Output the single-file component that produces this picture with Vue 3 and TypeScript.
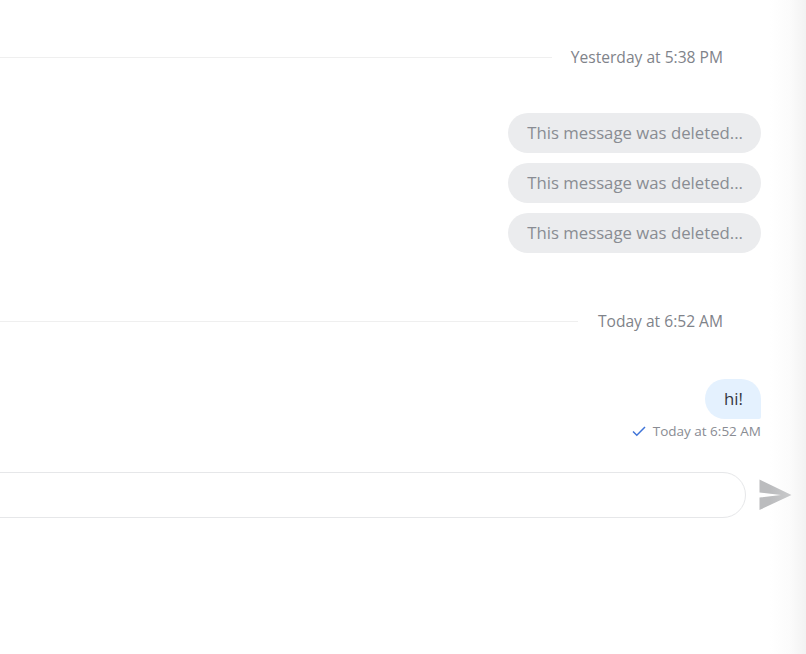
<template>
  <div class="chat-page">
    <div class="thread">
      <div class="divider first">
        <span class="divider-line"></span>
        <span class="divider-label">Yesterday at 5:38 PM</span>
      </div>

      <div class="deleted-list">
        <div v-for="id in deletedIds" :key="id" class="bubble deleted">This message was deleted...</div>
      </div>

      <div class="divider second">
        <span class="divider-line"></span>
        <span class="divider-label">Today at 6:52 AM</span>
      </div>

      <div class="bubble mine">hi!</div>
      <div class="meta">
        <svg class="check" width="14" height="11" viewBox="0 0 14 11" fill="none">
          <path d="M1 5.5 L4.8 9.2 L13 1" stroke="#3f74d8" stroke-width="1.5" />
        </svg>
        <span>Today at 6:52 AM</span>
      </div>
    </div>

    <div class="composer">
      <div class="input-box"></div>
      <button class="send-btn" type="button" aria-label="Send">
        <svg width="33" height="32" viewBox="0 0 33 32">
          <path d="M0.5 0.5 L32.5 16 L0.5 31 L0.5 18.5 L22 16 L0.5 13.5 Z" fill="#bbbcbe" />
        </svg>
      </button>
    </div>

    <div class="edge-shadow"></div>
  </div>
</template>

<script setup lang="ts">
const deletedIds = [1, 2, 3]
</script>

<style scoped>
.chat-page {
  position: relative;
  width: 806px;
  height: 654px;
  overflow: hidden;
  background: #fff;
  font-family: "Open Sans", "Liberation Sans", sans-serif;
}

.thread {
  display: flex;
  flex-direction: column;
  padding: 0 45px 0 0;
}

.divider {
  display: flex;
  align-items: center;
  gap: 19px;
  font-size: 15.6px;
  line-height: 22px;
  color: #7f838a;
}

.divider.first { margin-top: 46px; }
.divider.second {
  margin-top: 57px;
  gap: 20px;
}

.divider-line {
  flex: 1;
  height: 1px;
  background: #efefef;
}

.divider-label {
  padding-right: 38px;
}

.deleted-list {
  display: flex;
  flex-direction: column;
  align-items: flex-end;
  gap: 10px;
  margin-top: 45px;
}

.bubble {
  box-sizing: border-box;
  height: 40px;
  line-height: 40px;
  padding: 0 18px 0 19px;
  font-size: 16.75px;
  border-radius: 20px;
}

.deleted {
  background: #ebecee;
  color: #898c93;
}

.mine {
  align-self: flex-end;
  margin-top: 47px;
  background: #e4f1fe;
  color: #33373d;
  border-bottom-right-radius: 2px;
}

.meta {
  display: flex;
  align-items: center;
  justify-content: flex-end;
  gap: 7px;
  margin-top: 3px;
  font-size: 13.5px;
  line-height: 18px;
  color: #898c93;
}

.composer {
  display: flex;
  align-items: center;
  margin-top: 32px;
  padding-right: 14px;
}

.input-box {
  flex: 1;
  box-sizing: border-box;
  height: 46px;
  margin-left: -30px;
  border: 1px solid #e6e7e9;
  border-radius: 23px;
  background: #fff;
}

.send-btn {
  display: flex;
  padding: 0;
  margin-left: 13px;
  border: 0;
  background: none;
}

.edge-shadow {
  position: absolute;
  top: 0;
  right: 0;
  bottom: 0;
  width: 36px;
  pointer-events: none;
  background: linear-gradient(to right, rgba(240, 240, 240, 0), rgba(240, 240, 240, 0.25) 55%, rgba(240, 240, 240, 0.85));
}
</style>
